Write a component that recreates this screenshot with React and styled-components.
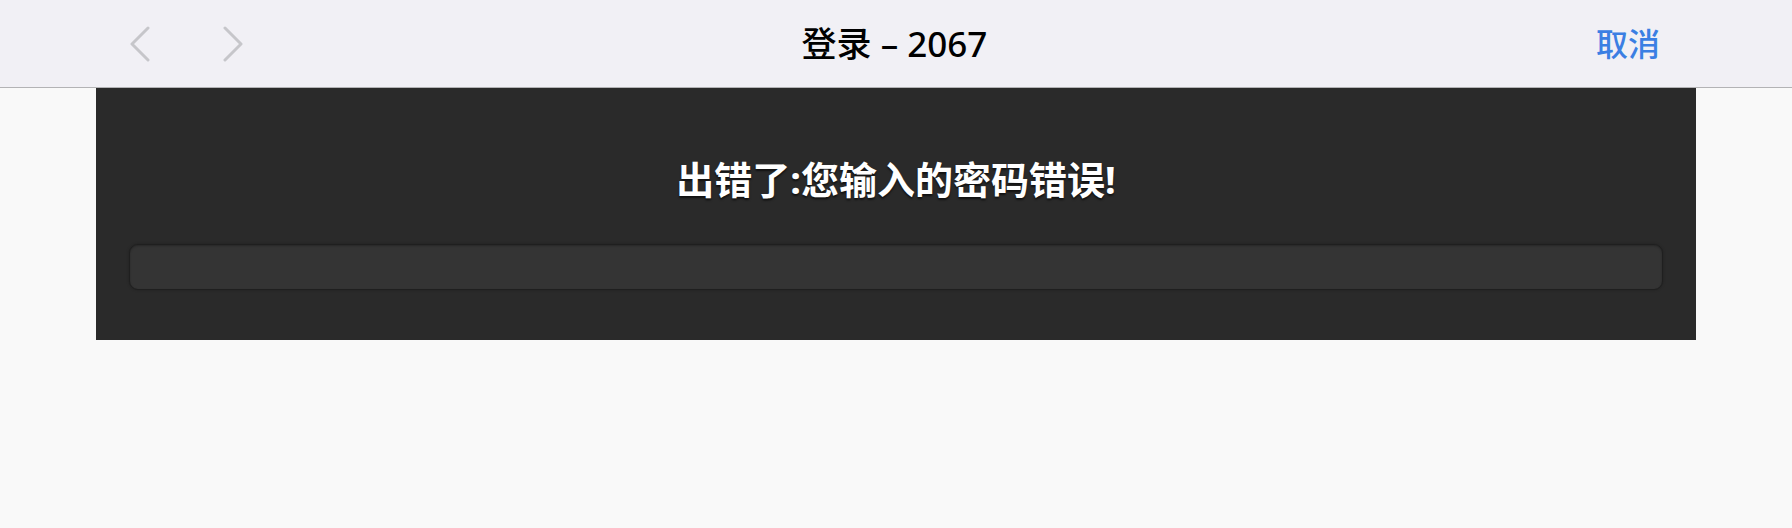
import React from 'react';
import styled, { createGlobalStyle } from 'styled-components';

const GlobalStyle = createGlobalStyle`
  html, body {
    margin: 0;
    padding: 0;
    background: #f9f9f9;
    font-family: "Noto Sans", "Noto Sans CJK SC", sans-serif;
  }
`;

function Chevron({ dir }) {
  const d = dir === 'left' ? 'M19 2 L3 18 L19 34' : 'M3 2 L19 18 L3 34';
  return (
    <svg width="22" height="36" viewBox="0 0 22 36" fill="none">
      <path d={d} stroke="#c6c6ca" strokeWidth="3" strokeLinecap="round" strokeLinejoin="round" />
    </svg>
  );
}

export default function App() {
  return (
    <>
      <GlobalStyle />
      <Page>
        <TopBar>
          <NavButtons>
            <NavButton aria-label="后退">
              <Chevron dir="left" />
            </NavButton>
            <NavButton aria-label="前进">
              <Chevron dir="right" />
            </NavButton>
          </NavButtons>
          <BarTitle>登录 – 2067</BarTitle>
          <CancelButton>取消</CancelButton>
        </TopBar>

        <Panel>
          <ErrorText>出错了:您输入的密码错误!</ErrorText>
          <Field />
        </Panel>
      </Page>
    </>
  );
}

const Page = styled.div`
  min-height: 528px;
  background: #f9f9f9;
`;

const TopBar = styled.header`
  height: 87px;
  display: grid;
  grid-template-columns: 1fr auto 1fr;
  align-items: center;
  background: #f1f0f5;
  border-bottom: 1px solid #b3b3b5;
  padding: 0 132px 0 129px;
`;

const NavButtons = styled.div`
  display: flex;
  align-items: center;
  gap: 71px;
  padding-top: 1px;
`;

const NavButton = styled.button`
  display: flex;
  padding: 0;
  border: 0;
  background: none;
`;

const BarTitle = styled.h1`
  margin: 0 0 5px;
  font-size: 35px;
  font-weight: 500;
  color: #000;
  font-family: "Noto Sans", "Noto Sans CJK SC", sans-serif;
`;

const CancelButton = styled.button`
  justify-self: end;
  margin-bottom: 4px;
  padding: 0;
  border: 0;
  background: none;
  font-family: "Noto Sans CJK SC", sans-serif;
  font-size: 32px;
  font-weight: 500;
  color: #3b7fe3;
`;

const Panel = styled.section`
  margin: 0 96px;
  background: #2a2a2a;
  padding: 67px 33px 50px;
  display: flex;
  flex-direction: column;
  align-items: stretch;
  gap: 41px;
`;

const ErrorText = styled.h2`
  margin: 0;
  height: 48px;
  line-height: 48px;
  text-align: center;
  font-family: "Noto Sans", "Noto Sans CJK SC", sans-serif;
  font-size: 38px;
  font-weight: 700;
  color: #fff;
  text-shadow: 0 2px 2px rgba(0, 0, 0, 0.6);
`;

const Field = styled.div`
  height: 44px;
  border: 1px solid #1f1f1f;
  border-radius: 9px;
  background: #343434;
  box-shadow: inset 0 1px 2px rgba(0, 0, 0, 0.25), 0 0 3px rgba(0, 0, 0, 0.25);
`;
